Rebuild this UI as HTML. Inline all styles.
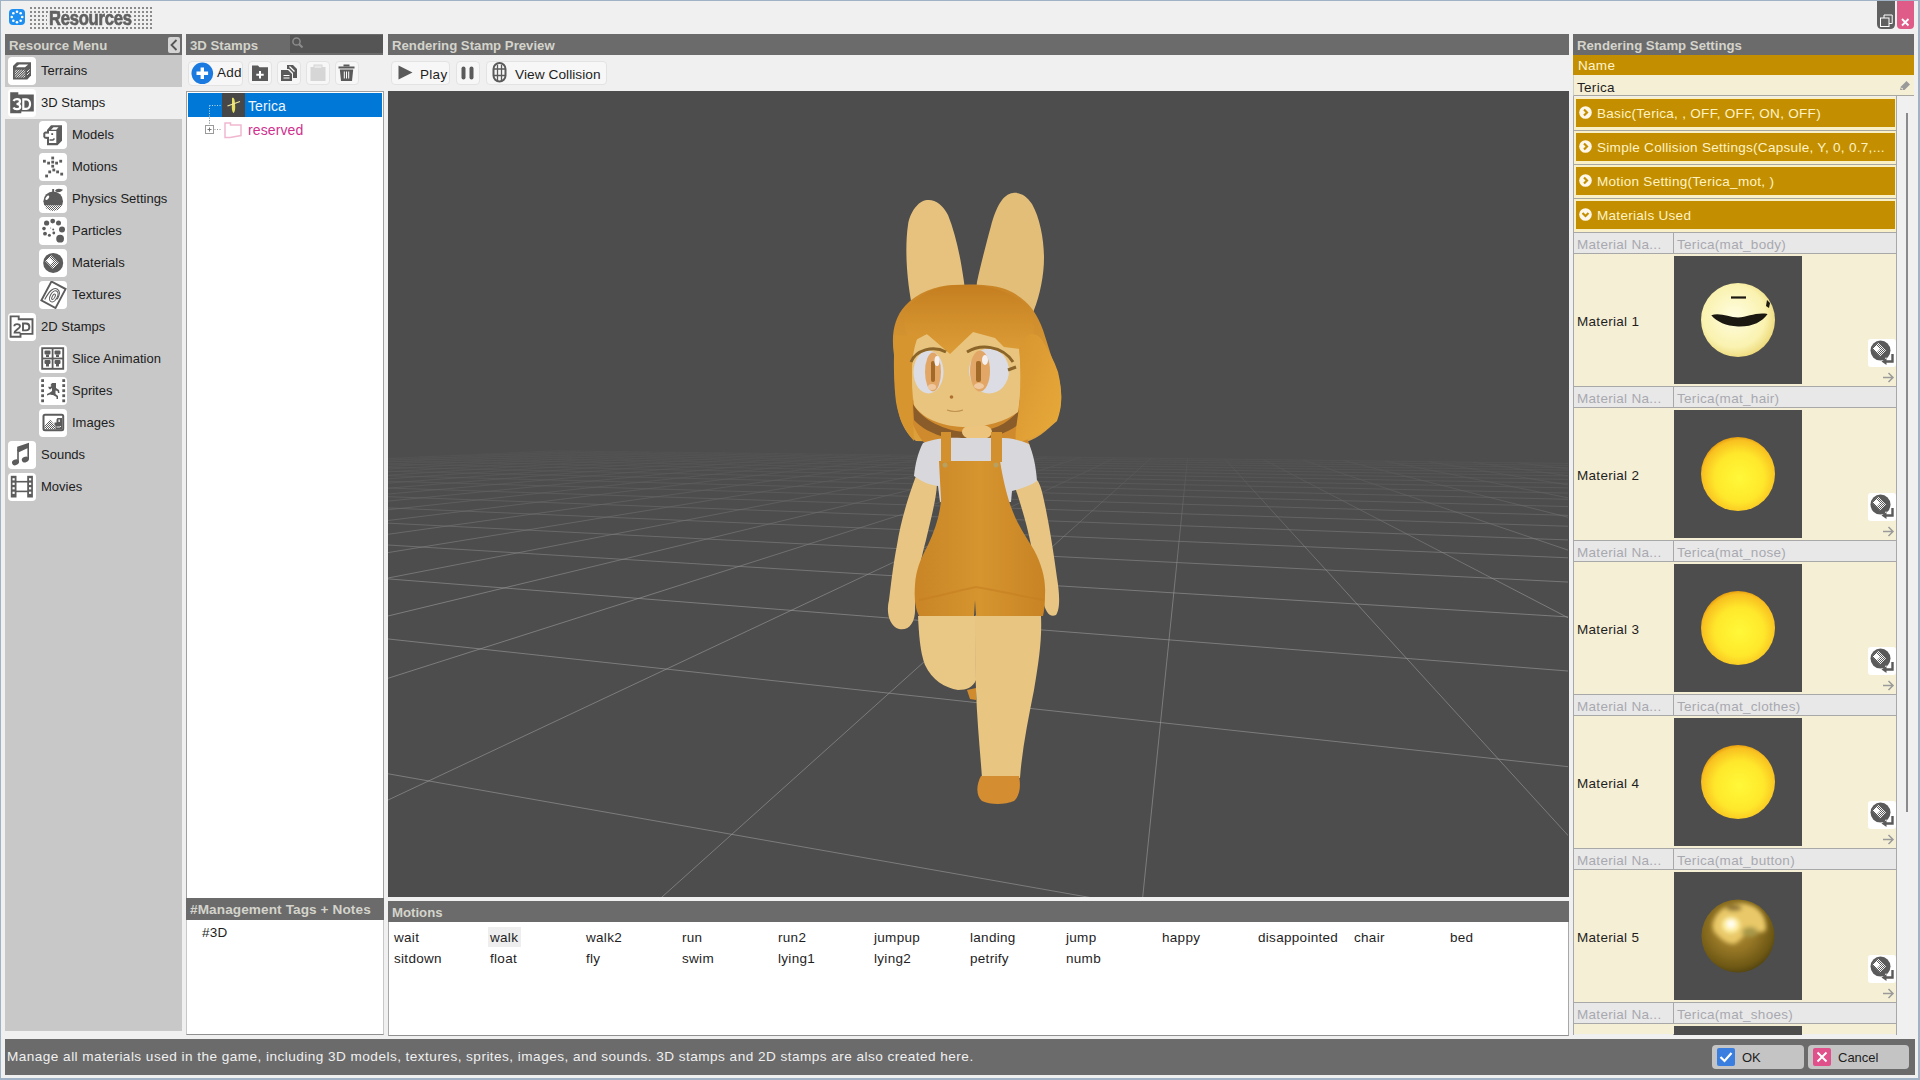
<!DOCTYPE html><html><head><meta charset="utf-8"><style>
*{box-sizing:border-box}
html,body{margin:0;padding:0}
body{width:1920px;height:1080px;overflow:hidden;position:relative;background:#f0f0f0;font-family:"Liberation Sans",sans-serif;font-size:13px;color:#1a1a1a}
.a{position:absolute}
svg.a{overflow:visible}
.t{position:absolute;white-space:nowrap;font-size:13.5px;line-height:16px;letter-spacing:0.3px;color:#1e1e1e}
.hdr{position:absolute;background:#6b6b6b;color:#d4d4cc;font-weight:bold;font-size:13.2px;line-height:23px;padding-left:4px;white-space:nowrap;overflow:hidden}
.ib{position:absolute;width:28px;height:28px;background:#fff;border-radius:4px}
.ib svg{position:absolute;left:0;top:0}
.mt{position:absolute;font-size:13px;line-height:16px;white-space:nowrap;color:#202020}
.tb{position:absolute;background:#f7f7f7;border:1px solid #e3e3e3;border-radius:4px}
.acc{position:absolute;left:1574px;width:323px;height:34px;background:#faf0c8;border-bottom:1px solid #a8a8a0}
.acc .g{position:absolute;left:2px;top:2px;right:2px;bottom:3px;background:#c38f00;color:#fff3c4;font-size:13.5px;letter-spacing:0.3px;line-height:29px;padding-left:21px;white-space:nowrap;overflow:hidden}
.acc svg{position:absolute;left:5px;top:9px}
.mh{position:absolute;left:1574px;width:323px;height:22px;background:#e8e8e8;border-top:1px solid #a8a8a8;border-bottom:1px solid #a8a8a8;color:#a8a8b0;font-size:13.5px;letter-spacing:0.3px;line-height:23px;white-space:nowrap}
.mb{position:absolute;left:1574px;width:323px;height:132px;background:#f5efd5}
</style></head><body>
<div class="a" style="left:0;top:0;width:1920px;height:1080px;border:1px solid #9fb2c6;border-width:1px 2px 2px 1px"></div>
<svg class="a" style="left:9px;top:9px" width="16" height="16"><rect width="16" height="16" rx="4" fill="#1e8ff0"/><circle cx="13.20" cy="8.00" r="1.3" fill="#fff"/><circle cx="11.68" cy="11.68" r="1.3" fill="#fff"/><circle cx="8.00" cy="13.20" r="1.3" fill="#fff"/><circle cx="4.32" cy="11.68" r="1.3" fill="#fff"/><circle cx="2.80" cy="8.00" r="1.3" fill="#fff"/><circle cx="4.32" cy="4.32" r="1.3" fill="#fff"/><circle cx="8.00" cy="2.80" r="1.3" fill="#fff"/><circle cx="11.68" cy="4.32" r="1.3" fill="#fff"/></svg>
<svg class="a" style="left:30px;top:7px" width="126" height="24" fill="#8a8a8a"><rect x="0" y="0" width="2" height="2"/><rect x="4" y="0" width="2" height="2"/><rect x="8" y="0" width="2" height="2"/><rect x="12" y="0" width="2" height="2"/><rect x="16" y="0" width="2" height="2"/><rect x="20" y="0" width="2" height="2"/><rect x="24" y="0" width="2" height="2"/><rect x="28" y="0" width="2" height="2"/><rect x="32" y="0" width="2" height="2"/><rect x="36" y="0" width="2" height="2"/><rect x="40" y="0" width="2" height="2"/><rect x="44" y="0" width="2" height="2"/><rect x="48" y="0" width="2" height="2"/><rect x="52" y="0" width="2" height="2"/><rect x="56" y="0" width="2" height="2"/><rect x="60" y="0" width="2" height="2"/><rect x="64" y="0" width="2" height="2"/><rect x="68" y="0" width="2" height="2"/><rect x="72" y="0" width="2" height="2"/><rect x="76" y="0" width="2" height="2"/><rect x="80" y="0" width="2" height="2"/><rect x="84" y="0" width="2" height="2"/><rect x="88" y="0" width="2" height="2"/><rect x="92" y="0" width="2" height="2"/><rect x="96" y="0" width="2" height="2"/><rect x="100" y="0" width="2" height="2"/><rect x="104" y="0" width="2" height="2"/><rect x="108" y="0" width="2" height="2"/><rect x="112" y="0" width="2" height="2"/><rect x="116" y="0" width="2" height="2"/><rect x="120" y="0" width="2" height="2"/><rect x="0" y="4" width="2" height="2"/><rect x="4" y="4" width="2" height="2"/><rect x="8" y="4" width="2" height="2"/><rect x="12" y="4" width="2" height="2"/><rect x="16" y="4" width="2" height="2"/><rect x="20" y="4" width="2" height="2"/><rect x="24" y="4" width="2" height="2"/><rect x="28" y="4" width="2" height="2"/><rect x="32" y="4" width="2" height="2"/><rect x="36" y="4" width="2" height="2"/><rect x="40" y="4" width="2" height="2"/><rect x="44" y="4" width="2" height="2"/><rect x="48" y="4" width="2" height="2"/><rect x="52" y="4" width="2" height="2"/><rect x="56" y="4" width="2" height="2"/><rect x="60" y="4" width="2" height="2"/><rect x="64" y="4" width="2" height="2"/><rect x="68" y="4" width="2" height="2"/><rect x="72" y="4" width="2" height="2"/><rect x="76" y="4" width="2" height="2"/><rect x="80" y="4" width="2" height="2"/><rect x="84" y="4" width="2" height="2"/><rect x="88" y="4" width="2" height="2"/><rect x="92" y="4" width="2" height="2"/><rect x="96" y="4" width="2" height="2"/><rect x="100" y="4" width="2" height="2"/><rect x="104" y="4" width="2" height="2"/><rect x="108" y="4" width="2" height="2"/><rect x="112" y="4" width="2" height="2"/><rect x="116" y="4" width="2" height="2"/><rect x="120" y="4" width="2" height="2"/><rect x="0" y="8" width="2" height="2"/><rect x="4" y="8" width="2" height="2"/><rect x="8" y="8" width="2" height="2"/><rect x="12" y="8" width="2" height="2"/><rect x="16" y="8" width="2" height="2"/><rect x="20" y="8" width="2" height="2"/><rect x="24" y="8" width="2" height="2"/><rect x="28" y="8" width="2" height="2"/><rect x="32" y="8" width="2" height="2"/><rect x="36" y="8" width="2" height="2"/><rect x="40" y="8" width="2" height="2"/><rect x="44" y="8" width="2" height="2"/><rect x="48" y="8" width="2" height="2"/><rect x="52" y="8" width="2" height="2"/><rect x="56" y="8" width="2" height="2"/><rect x="60" y="8" width="2" height="2"/><rect x="64" y="8" width="2" height="2"/><rect x="68" y="8" width="2" height="2"/><rect x="72" y="8" width="2" height="2"/><rect x="76" y="8" width="2" height="2"/><rect x="80" y="8" width="2" height="2"/><rect x="84" y="8" width="2" height="2"/><rect x="88" y="8" width="2" height="2"/><rect x="92" y="8" width="2" height="2"/><rect x="96" y="8" width="2" height="2"/><rect x="100" y="8" width="2" height="2"/><rect x="104" y="8" width="2" height="2"/><rect x="108" y="8" width="2" height="2"/><rect x="112" y="8" width="2" height="2"/><rect x="116" y="8" width="2" height="2"/><rect x="120" y="8" width="2" height="2"/><rect x="0" y="12" width="2" height="2"/><rect x="4" y="12" width="2" height="2"/><rect x="8" y="12" width="2" height="2"/><rect x="12" y="12" width="2" height="2"/><rect x="16" y="12" width="2" height="2"/><rect x="20" y="12" width="2" height="2"/><rect x="24" y="12" width="2" height="2"/><rect x="28" y="12" width="2" height="2"/><rect x="32" y="12" width="2" height="2"/><rect x="36" y="12" width="2" height="2"/><rect x="40" y="12" width="2" height="2"/><rect x="44" y="12" width="2" height="2"/><rect x="48" y="12" width="2" height="2"/><rect x="52" y="12" width="2" height="2"/><rect x="56" y="12" width="2" height="2"/><rect x="60" y="12" width="2" height="2"/><rect x="64" y="12" width="2" height="2"/><rect x="68" y="12" width="2" height="2"/><rect x="72" y="12" width="2" height="2"/><rect x="76" y="12" width="2" height="2"/><rect x="80" y="12" width="2" height="2"/><rect x="84" y="12" width="2" height="2"/><rect x="88" y="12" width="2" height="2"/><rect x="92" y="12" width="2" height="2"/><rect x="96" y="12" width="2" height="2"/><rect x="100" y="12" width="2" height="2"/><rect x="104" y="12" width="2" height="2"/><rect x="108" y="12" width="2" height="2"/><rect x="112" y="12" width="2" height="2"/><rect x="116" y="12" width="2" height="2"/><rect x="120" y="12" width="2" height="2"/><rect x="0" y="16" width="2" height="2"/><rect x="4" y="16" width="2" height="2"/><rect x="8" y="16" width="2" height="2"/><rect x="12" y="16" width="2" height="2"/><rect x="16" y="16" width="2" height="2"/><rect x="20" y="16" width="2" height="2"/><rect x="24" y="16" width="2" height="2"/><rect x="28" y="16" width="2" height="2"/><rect x="32" y="16" width="2" height="2"/><rect x="36" y="16" width="2" height="2"/><rect x="40" y="16" width="2" height="2"/><rect x="44" y="16" width="2" height="2"/><rect x="48" y="16" width="2" height="2"/><rect x="52" y="16" width="2" height="2"/><rect x="56" y="16" width="2" height="2"/><rect x="60" y="16" width="2" height="2"/><rect x="64" y="16" width="2" height="2"/><rect x="68" y="16" width="2" height="2"/><rect x="72" y="16" width="2" height="2"/><rect x="76" y="16" width="2" height="2"/><rect x="80" y="16" width="2" height="2"/><rect x="84" y="16" width="2" height="2"/><rect x="88" y="16" width="2" height="2"/><rect x="92" y="16" width="2" height="2"/><rect x="96" y="16" width="2" height="2"/><rect x="100" y="16" width="2" height="2"/><rect x="104" y="16" width="2" height="2"/><rect x="108" y="16" width="2" height="2"/><rect x="112" y="16" width="2" height="2"/><rect x="116" y="16" width="2" height="2"/><rect x="120" y="16" width="2" height="2"/><rect x="0" y="20" width="2" height="2"/><rect x="4" y="20" width="2" height="2"/><rect x="8" y="20" width="2" height="2"/><rect x="12" y="20" width="2" height="2"/><rect x="16" y="20" width="2" height="2"/><rect x="20" y="20" width="2" height="2"/><rect x="24" y="20" width="2" height="2"/><rect x="28" y="20" width="2" height="2"/><rect x="32" y="20" width="2" height="2"/><rect x="36" y="20" width="2" height="2"/><rect x="40" y="20" width="2" height="2"/><rect x="44" y="20" width="2" height="2"/><rect x="48" y="20" width="2" height="2"/><rect x="52" y="20" width="2" height="2"/><rect x="56" y="20" width="2" height="2"/><rect x="60" y="20" width="2" height="2"/><rect x="64" y="20" width="2" height="2"/><rect x="68" y="20" width="2" height="2"/><rect x="72" y="20" width="2" height="2"/><rect x="76" y="20" width="2" height="2"/><rect x="80" y="20" width="2" height="2"/><rect x="84" y="20" width="2" height="2"/><rect x="88" y="20" width="2" height="2"/><rect x="92" y="20" width="2" height="2"/><rect x="96" y="20" width="2" height="2"/><rect x="100" y="20" width="2" height="2"/><rect x="104" y="20" width="2" height="2"/><rect x="108" y="20" width="2" height="2"/><rect x="112" y="20" width="2" height="2"/><rect x="116" y="20" width="2" height="2"/><rect x="120" y="20" width="2" height="2"/></svg>
<div class="a" style="left:47px;top:14px;width:87px;height:12px;background:#f0f0f0"></div>
<div class="a" style="left:49px;top:5.5px;font-size:20px;line-height:24px;font-weight:bold;color:#606060;transform:scaleX(0.83);transform-origin:0 0;letter-spacing:-0.3px;-webkit-text-stroke:0.7px #606060">Resources</div>
<svg class="a" style="left:1877px;top:1px" width="18" height="29"><path d="M0,0 H18 V23 Q18,28 13,28 H5 Q0,28 0,23 Z" fill="#606060"/><rect x="3.5" y="17" width="8.5" height="8.5" fill="#606060" stroke="#fff" stroke-width="1"/><path d="M7,17 V14 H15.2 V22.5 H12" fill="none" stroke="#fff" stroke-width="1"/></svg>
<svg class="a" style="left:1897px;top:1px" width="18" height="29"><path d="M0,0 H17 V24 Q17,28 13,28 H4 Q0,28 0,24 Z" fill="#e05c88"/><path d="M5,18 L11.5,24.5 M11.5,18 L5,24.5" stroke="#fff" stroke-width="1.8"/></svg>
<div class="hdr" style="left:5px;top:34px;width:177px;height:21px">Resource Menu</div>
<svg class="a" style="left:168px;top:37px" width="12" height="16"><rect width="12" height="16" rx="2" fill="#d4d4d4"/><path d="M8.5,3 L3.5,8 L8.5,13" fill="none" stroke="#555" stroke-width="1.8"/></svg>
<div class="a" style="left:5px;top:55px;width:177px;height:976px;background:#c8c8c8"></div>
<div class="a" style="left:5px;top:87px;width:177px;height:32px;background:#efefef"></div>
<div class="ib" style="left:8px;top:57px"><svg width="28" height="28" viewBox="0 0 28 28" style="position:absolute;left:0;top:0"><defs><clipPath id="tc"><rect x="6.8" y="12.5" width="10.5" height="8.3"/></clipPath></defs>
<path fill="#5c5c5c" d="M5,9 L8.8,5.3 L23,5.3 L23,18.5 L19.3,22.4 L5,22.4 Z"/>
<path fill="#fff" d="M7.8,10.2 L11,7.4 L20.2,7.4 L17,10.2 Z"/>
<g clip-path="url(#tc)"><line x1="-1.5000000000000009" y1="20.8" x2="6.8" y2="12.5" stroke="#fff" stroke-width="0.9"/><line x1="0.8999999999999986" y1="20.8" x2="9.2" y2="12.5" stroke="#fff" stroke-width="0.9"/><line x1="3.299999999999999" y1="20.8" x2="11.6" y2="12.5" stroke="#fff" stroke-width="0.9"/><line x1="5.699999999999999" y1="20.8" x2="14.0" y2="12.5" stroke="#fff" stroke-width="0.9"/><line x1="8.099999999999998" y1="20.8" x2="16.4" y2="12.5" stroke="#fff" stroke-width="0.9"/><line x1="10.5" y1="20.8" x2="18.8" y2="12.5" stroke="#fff" stroke-width="0.9"/><line x1="12.899999999999999" y1="20.8" x2="21.2" y2="12.5" stroke="#fff" stroke-width="0.9"/><line x1="15.3" y1="20.8" x2="23.6" y2="12.5" stroke="#fff" stroke-width="0.9"/><line x1="17.7" y1="20.8" x2="26.0" y2="12.5" stroke="#fff" stroke-width="0.9"/></g>
<line x1="19" y1="15" x2="21.5" y2="12.5" stroke="#fff" stroke-width="0.9"/><line x1="19" y1="18" x2="21.5" y2="15.5" stroke="#fff" stroke-width="0.9"/></svg></div>
<div class="mt" style="left:41px;top:63px">Terrains</div>
<div class="ib" style="left:8px;top:89px"><svg width="28" height="28" viewBox="0 0 28 28" style="position:absolute;left:0;top:0"><path fill="#5c5c5c" d="M2.2,3.3 L10.3,3.3 L10.3,5.6 L25.8,5.6 L25.8,22.4 L13.3,22.4 L13.3,24.3 L2.2,24.3 Z"/>
<path fill="none" stroke="#fff" stroke-width="2.2" d="M5.5,12 C6.5,9.5 12,9.5 12,12.3 C12,14.5 9.5,15 8.5,15 C10,15 12.2,15.5 12.2,17.8 C12.2,20.8 6.5,20.8 5.5,18.5"/>
<path fill="none" stroke="#fff" stroke-width="2.2" d="M15.3,10.3 L18.3,10.3 C23.3,10.3 23.3,19.8 18.3,19.8 L15.3,19.8 Z"/></svg></div>
<div class="mt" style="left:41px;top:95px">3D Stamps</div>
<div class="ib" style="left:39px;top:121px"><svg width="28" height="28" viewBox="0 0 28 28" style="position:absolute;left:0;top:0"><path fill="#5c5c5c" d="M8,9 L12,4.3 L23,4.3 L23,19.8 L18.5,24.2 L8,24.2 L8,18 L5.5,17.5 L4.3,16 L4.3,12 L6,10.5 L8,10.5 Z"/>
<path fill="#fff" d="M10,10 L10,22 L17.3,22 L17.3,10 Z"/><path fill="#fff" d="M6.3,12.6 L10,12.6 L10,15.8 L6.3,15.8 Z"/>
<path fill="#fff" d="M12,8.8 L14.5,6.2 L19.5,6.2 L17.3,8.8 Z"/>
<rect x="12.3" y="12.2" width="1.8" height="1.8" fill="#5c5c5c"/>
<path d="M10.5,19 L14,19 L15.5,17.5" stroke="#5c5c5c" stroke-width="1.5" fill="none"/></svg></div>
<div class="mt" style="left:72px;top:127px">Models</div>
<div class="ib" style="left:39px;top:153px"><svg width="28" height="28" viewBox="0 0 28 28" style="position:absolute;left:0;top:0"><rect x="12.299999999999999" y="3.6" width="2.8" height="2.8" fill="#5c5c5c"/><rect x="4.0" y="6.799999999999999" width="2.8" height="2.8" fill="#5c5c5c"/><rect x="8.2" y="8.7" width="2.8" height="2.8" fill="#5c5c5c"/><rect x="12.299999999999999" y="7.699999999999999" width="2.8" height="2.8" fill="#5c5c5c"/><rect x="16.200000000000003" y="8.7" width="2.8" height="2.8" fill="#5c5c5c"/><rect x="20.3" y="6.799999999999999" width="2.8" height="2.8" fill="#5c5c5c"/><rect x="12.299999999999999" y="11.799999999999999" width="2.8" height="2.8" fill="#5c5c5c"/><rect x="13.4" y="15.6" width="2.8" height="2.8" fill="#5c5c5c"/><rect x="9.299999999999999" y="17.5" width="2.8" height="2.8" fill="#5c5c5c"/><rect x="17.200000000000003" y="17.5" width="2.8" height="2.8" fill="#5c5c5c"/><rect x="6.199999999999999" y="21.6" width="2.8" height="2.8" fill="#5c5c5c"/><rect x="21.3" y="19.700000000000003" width="2.8" height="2.8" fill="#5c5c5c"/></svg></div>
<div class="mt" style="left:72px;top:159px">Motions</div>
<div class="ib" style="left:39px;top:185px"><svg width="28" height="28" viewBox="0 0 28 28" style="position:absolute;left:0;top:0"><defs><pattern id="chk" width="2" height="2" patternUnits="userSpaceOnUse"><rect width="1" height="1" fill="#5c5c5c"/><rect x="1" y="1" width="1" height="1" fill="#5c5c5c"/></pattern>
<clipPath id="ac"><circle cx="14.2" cy="16.3" r="9.8"/></clipPath></defs>
<g clip-path="url(#ac)"><rect x="3" y="5" width="23" height="15.3" fill="#5c5c5c"/><rect x="3" y="20.3" width="23" height="6" fill="url(#chk)"/></g>
<rect x="13.2" y="4" width="1.9" height="5" fill="#5c5c5c"/>
<path fill="#5c5c5c" d="M16,6 C17,3.5 20,2.8 24,4.8 C22,7.5 19,8 16,6 Z"/>
<ellipse cx="8.3" cy="12.8" rx="1.3" ry="2.6" transform="rotate(40 8.3 12.8)" fill="#fff"/></svg></div>
<div class="mt" style="left:72px;top:191px">Physics Settings</div>
<div class="ib" style="left:39px;top:217px"><svg width="28" height="28" viewBox="0 0 28 28" style="position:absolute;left:0;top:0"><circle cx="13.7" cy="4.1" r="2.4" fill="#5c5c5c"/><circle cx="7.6" cy="6" r="2.6" fill="#5c5c5c"/><circle cx="19.5" cy="6" r="2.5" fill="#5c5c5c"/><circle cx="5" cy="11.6" r="1.8" fill="#5c5c5c"/><circle cx="23" cy="12.6" r="3" fill="#5c5c5c"/><circle cx="6" cy="16.7" r="1.9" fill="#5c5c5c"/><circle cx="10.4" cy="18.3" r="1.5" fill="#5c5c5c"/><circle cx="14.8" cy="16" r="1.4" fill="#5c5c5c"/><circle cx="14.2" cy="12.6" r="1" fill="#5c5c5c"/><circle cx="11.7" cy="11" r="0.5" fill="#5c5c5c"/><circle cx="21.1" cy="21.7" r="3.9" fill="#5c5c5c"/></svg></div>
<div class="mt" style="left:72px;top:223px">Particles</div>
<div class="ib" style="left:39px;top:249px"><svg width="28" height="28" viewBox="0 0 28 28" style="position:absolute;left:0;top:0"><defs><pattern id="chk2" width="2" height="2" patternUnits="userSpaceOnUse"><rect width="1" height="1" fill="#fff"/><rect x="1" y="1" width="1" height="1" fill="#fff"/></pattern></defs>
<circle cx="14.2" cy="13.9" r="10" fill="#5c5c5c"/>
<path d="M12,6 L20,14 L14,20 L6,12 Z" fill="url(#chk2)"/>
<path d="M10.5,9 L14,12.5 L11,15.5 L7.5,12 Z" fill="#fff"/></svg></div>
<div class="mt" style="left:72px;top:255px">Materials</div>
<div class="ib" style="left:39px;top:281px"><svg width="28" height="28" viewBox="0 0 28 28" style="position:absolute;left:0;top:0"><g transform="rotate(28 14.5 13.7)"><rect x="6.5" y="3" width="16" height="21.5" fill="none" stroke="#5c5c5c" stroke-width="1.9"/>
<path d="M9,22 C9,12 11,7 15,7 C19,7 20,12 20,16" stroke="#5c5c5c" stroke-width="1.1" fill="none"/>
<ellipse cx="15.5" cy="15" rx="3.5" ry="6" stroke="#5c5c5c" stroke-width="1.1" fill="none"/>
<ellipse cx="15.5" cy="15.5" rx="1.3" ry="3" stroke="#5c5c5c" stroke-width="1" fill="none"/></g></svg></div>
<div class="mt" style="left:72px;top:287px">Textures</div>
<div class="ib" style="left:8px;top:313px"><svg width="28" height="28" viewBox="0 0 28 28" style="position:absolute;left:0;top:0"><path fill="none" stroke="#5c5c5c" stroke-width="1.9" d="M2.6,3.4 L10.7,3.4 L10.7,6.2 L24.5,6.2 L24.5,20.9 L12.5,20.9 L12.5,23.8 L2.6,23.8 Z"/>
<path fill="none" stroke="#5c5c5c" stroke-width="1.9" d="M6.3,13.2 C6.3,10.6 12,10.3 12,13.2 C12,15.5 7,17 6.6,19.6 L12.5,19.6"/>
<path fill="none" stroke="#5c5c5c" stroke-width="1.9" d="M15,10.5 L18,10.5 C22.5,10.5 22.5,17.4 18,17.4 L15,17.4 Z"/></svg></div>
<div class="mt" style="left:41px;top:319px">2D Stamps</div>
<div class="ib" style="left:39px;top:345px"><svg width="28" height="28" viewBox="0 0 28 28" style="position:absolute;left:0;top:0"><rect x="3.2" y="3.2" width="21" height="20.6" fill="none" stroke="#5c5c5c" stroke-width="1.9"/>
<line x1="13.6" y1="3" x2="13.6" y2="24" stroke="#5c5c5c" stroke-width="1.8"/><line x1="3" y1="13.5" x2="24.5" y2="13.5" stroke="#5c5c5c" stroke-width="1.8"/><rect x="5.5" y="5.5" width="6" height="4" rx="1" fill="#5c5c5c"/><rect x="7.0" y="9.5" width="3" height="2.5" fill="#5c5c5c"/><rect x="15.5" y="5.5" width="6" height="4" rx="1" fill="#5c5c5c"/><rect x="17.0" y="9.5" width="3" height="2.5" fill="#5c5c5c"/><rect x="5.5" y="15" width="6" height="4" rx="1" fill="#5c5c5c"/><rect x="7.0" y="19" width="3" height="2.5" fill="#5c5c5c"/><rect x="15.5" y="15" width="6" height="4" rx="1" fill="#5c5c5c"/><rect x="17.0" y="19" width="3" height="2.5" fill="#5c5c5c"/></svg></div>
<div class="mt" style="left:72px;top:351px">Slice Animation</div>
<div class="ib" style="left:39px;top:377px"><svg width="28" height="28" viewBox="0 0 28 28" style="position:absolute;left:0;top:0"><rect x="2.2" y="2.2" width="2.8" height="2.8" fill="#5c5c5c"/><rect x="23.3" y="2.2" width="2.8" height="2.8" fill="#5c5c5c"/><rect x="2.2" y="7.2" width="2.8" height="2.8" fill="#5c5c5c"/><rect x="23.3" y="7.2" width="2.8" height="2.8" fill="#5c5c5c"/><rect x="2.2" y="12.3" width="2.8" height="2.8" fill="#5c5c5c"/><rect x="23.3" y="12.3" width="2.8" height="2.8" fill="#5c5c5c"/><rect x="2.2" y="17.3" width="2.8" height="2.8" fill="#5c5c5c"/><rect x="23.3" y="17.3" width="2.8" height="2.8" fill="#5c5c5c"/><rect x="2.2" y="22.4" width="2.8" height="2.8" fill="#5c5c5c"/><rect x="23.3" y="22.4" width="2.8" height="2.8" fill="#5c5c5c"/><path fill="#5c5c5c" d="M13,6 L17,6 L17,11 L20,13 L20.5,16 L19,16 L18.5,14 L16.5,13.5 L16.5,17 L19,19 L19,22 L17.5,22 L17.5,20 L14,18 L13,18 L11,17.5 L8,18.5 L8,17 L11,15.5 L13,14 L13,11 L11,12.5 L9.5,11 L9.5,9.5 L11,10 L12.5,9 L11.5,8 Z"/></svg></div>
<div class="mt" style="left:72px;top:383px">Sprites</div>
<div class="ib" style="left:39px;top:409px"><svg width="28" height="28" viewBox="0 0 28 28" style="position:absolute;left:0;top:0"><defs><pattern id="chk3" width="2" height="2" patternUnits="userSpaceOnUse"><rect width="1" height="1" fill="#5c5c5c"/><rect x="1" y="1" width="1" height="1" fill="#5c5c5c"/></pattern></defs>
<rect x="4.5" y="5.7" width="19.7" height="15.6" rx="1.5" fill="none" stroke="#5c5c5c" stroke-width="2"/>
<path d="M5.5,20.5 L5.5,17 L11,10.5 L16.5,17 L16.5,20.5 Z" fill="url(#chk3)"/>
<path fill="#5c5c5c" d="M18.5,9 L23,9 L23,20.5 L16.5,20.5 L16.5,16.5 L15.5,16.5 L15.5,13.5 L17.5,13.5 L17.5,10.5 Z"/>
<rect x="19.5" y="10.5" width="1.3" height="2.5" fill="#fff"/><path d="M17.5,18 L21,18 L22,17" stroke="#fff" stroke-width="0.9" fill="none"/></svg></div>
<div class="mt" style="left:72px;top:415px">Images</div>
<div class="ib" style="left:8px;top:441px"><svg width="28" height="28" viewBox="0 0 28 28" style="position:absolute;left:0;top:0"><path fill="#5c5c5c" d="M9.2,8.5 L21,3 L21,18.5 L19.4,18.5 L19.4,7.3 L10.8,11.2 L10.8,21.5 L9.2,21.5 Z"/>
<path fill="#5c5c5c" d="M9.2,5.8 L21,1.8 L21,6 L9.2,10.2 Z"/>
<ellipse cx="7.5" cy="21.3" rx="3.6" ry="2.8" transform="rotate(-25 7.5 21.3)" fill="#5c5c5c"/>
<ellipse cx="17.3" cy="18.5" rx="3.6" ry="2.8" transform="rotate(-25 17.3 18.5)" fill="#5c5c5c"/></svg></div>
<div class="mt" style="left:41px;top:447px">Sounds</div>
<div class="ib" style="left:8px;top:473px"><svg width="28" height="28" viewBox="0 0 28 28" style="position:absolute;left:0;top:0"><rect x="2.8" y="2.8" width="5.7" height="21.7" fill="#5c5c5c"/><rect x="19.2" y="2.8" width="5.7" height="21.7" fill="#5c5c5c"/><rect x="8" y="7.9" width="12" height="1.6" fill="#5c5c5c"/><rect x="8" y="17.6" width="12" height="1.6" fill="#5c5c5c"/><rect x="4.5" y="5.2" width="2.2" height="2.2" fill="#fff"/><rect x="21" y="5.2" width="2.2" height="2.2" fill="#fff"/><rect x="4.5" y="9.7" width="2.2" height="2.2" fill="#fff"/><rect x="21" y="9.7" width="2.2" height="2.2" fill="#fff"/><rect x="4.5" y="14.2" width="2.2" height="2.2" fill="#fff"/><rect x="21" y="14.2" width="2.2" height="2.2" fill="#fff"/><rect x="4.5" y="18.7" width="2.2" height="2.2" fill="#fff"/><rect x="21" y="18.7" width="2.2" height="2.2" fill="#fff"/></svg></div>
<div class="mt" style="left:41px;top:479px">Movies</div>
<div class="hdr" style="left:186px;top:34px;width:197px;height:21px">3D Stamps</div>
<div class="a" style="left:290px;top:35px;width:93px;height:18px;background:#555"></div>
<svg class="a" style="left:291px;top:36px" width="14" height="14"><circle cx="5.5" cy="5.5" r="3.6" fill="none" stroke="#8c8c8c" stroke-width="1.5"/><path d="M8.2,8.2 L11.5,11.5" stroke="#8c8c8c" stroke-width="2"/></svg>
<div class="tb" style="left:188px;top:61px;width:55px;height:25px"></div>
<svg class="a" style="left:191px;top:62px" width="23" height="23"><circle cx="11.3" cy="11.3" r="10.8" fill="#1a7ae0"/><path d="M11.3,5.5 V17.1 M5.5,11.3 H17.1" stroke="#fff" stroke-width="3.4"/></svg>
<div class="t" style="left:217px;top:65px">Add</div>
<div class="tb" style="left:248px;top:61px;width:24px;height:24px"></div>
<div class="tb" style="left:277px;top:61px;width:24px;height:24px"></div>
<div class="tb" style="left:306px;top:61px;width:24px;height:24px"></div>
<div class="tb" style="left:335px;top:61px;width:24px;height:24px"></div>
<svg class="a" style="left:252px;top:65px" width="16" height="16"><path d="M0,0.5 H6 L7.5,2.3 H16 V16 H0 Z" fill="#5a5a5a"/><path d="M8,6 V13.5 M4.3,9.8 H11.7" stroke="#fff" stroke-width="2"/></svg>
<svg class="a" style="left:281px;top:65px" width="17" height="16"><path d="M6,0 H12 L16,4 V13 H12 V8 L8,4 H6 Z" fill="#5a5a5a"/><path d="M0,5 H7 L11,9 V16 H0 Z" fill="#5a5a5a"/><path d="M2.5,10.5 H8.5 M2.5,13 H8.5" stroke="#fff" stroke-width="1"/><path d="M8.5,1.5 L13.5,6.5" stroke="#fff" stroke-width="1.2"/></svg>
<svg class="a" style="left:310px;top:65px" width="16" height="16"><rect x="0.5" y="2" width="15" height="14" fill="#d6d6d6"/><rect x="4" y="0" width="8" height="3.5" fill="#e8e8e8" stroke="#d6d6d6"/></svg>
<svg class="a" style="left:338px;top:64px" width="18" height="18"><rect x="0.5" y="2.5" width="16" height="2" fill="#5a5a5a"/><rect x="5.5" y="0.5" width="6" height="2" fill="#5a5a5a"/><path d="M1.8,5.5 H15.2 L14,17 H3 Z" fill="#5a5a5a"/><path d="M6.3,7.5 V14.5 M8.5,7.5 V14.5 M10.7,7.5 V14.5" stroke="#fff" stroke-width="1"/></svg>
<div class="a" style="left:186px;top:91px;width:198px;height:808px;background:#fff;border:1px solid #a0a0a0;border-bottom:0"></div>
<div class="a" style="left:188px;top:93px;width:194px;height:24px;background:#0078d7"></div>
<div class="a" style="left:222px;top:93px;width:23px;height:24px;background:#474747"></div>
<svg class="a" style="left:226px;top:96px" width="16" height="20"><path d="M6,2 C8,1 9,4 9,8 C9.5,12 9,16 7.5,17 C6,16 5.5,12 6,8 Z" fill="#e8e060"/><path d="M1.5,10 L14,5.5" stroke="#f0e8a0" stroke-width="1.3"/></svg>
<svg class="a" style="left:205px;top:101px" width="20" height="35"><path d="M4.5,4.5 H16 M4.5,4.5 V24" stroke="#b8d8f0" stroke-width="1" stroke-dasharray="1,1.5"/><path d="M4.5,14 V24 M9.5,28.5 H16" stroke="#909090" stroke-width="1" stroke-dasharray="1,1.5"/><rect x="0.5" y="24.5" width="8" height="8" fill="#fff" stroke="#9a9a9a"/><path d="M2.5,28.5 H6.5 M4.5,26.5 V30.5" stroke="#777" stroke-width="1"/></svg>
<svg class="a" style="left:224px;top:121px" width="19" height="18"><path d="M1,2 H6.5 V4 H17 V14.5 L6,16.5 L1,16.5 Z" fill="none" stroke="#f0b8d0" stroke-width="1.5"/></svg>
<div class="t" style="left:248px;top:98px;color:#eef6ff;font-size:14px;letter-spacing:0.1px">Terica</div>
<div class="t" style="left:248px;top:122px;color:#d0308e;font-size:14px;letter-spacing:0.1px">reserved</div>
<div class="hdr" style="left:186px;top:898px;width:198px;height:22px;line-height:23px;font-size:13.6px;letter-spacing:0.1px">#Management Tags + Notes</div>
<div class="a" style="left:186px;top:920px;width:198px;height:115px;background:#fff;border:1px solid #c8c8c8;border-bottom-color:#909090;border-top:0"></div>
<div class="t" style="left:202px;top:925px">#3D</div>
<div class="hdr" style="left:388px;top:34px;width:1181px;height:21px">Rendering Stamp Preview</div>
<div class="tb" style="left:391px;top:61px;width:59px;height:24px"></div>
<svg class="a" style="left:398px;top:65px" width="15" height="16"><path d="M0.5,0.5 L14.5,7.5 L0.5,14.5 Z" fill="#5a5a5a"/></svg>
<div class="t" style="left:420px;top:67px">Play</div>
<div class="tb" style="left:456px;top:61px;width:24px;height:24px"></div>
<svg class="a" style="left:461px;top:66px" width="14" height="14"><rect x="0.5" y="0.5" width="4" height="13" rx="2" fill="#5a5a5a"/><rect x="8.5" y="0.5" width="4" height="13" rx="2" fill="#5a5a5a"/></svg>
<div class="tb" style="left:486px;top:61px;width:121px;height:24px"></div>
<svg class="a" style="left:492px;top:62px" width="16" height="21"><rect x="1.5" y="1" width="12" height="18.5" rx="6" fill="none" stroke="#5a5a5a" stroke-width="2"/><path d="M5.5,2.5 V18 M9.5,2.5 V18 M1.5,7 H13.5 M1.5,13.5 H13.5" stroke="#5a5a5a" stroke-width="1.3"/></svg>
<div class="t" style="left:515px;top:67px;font-size:13.7px;letter-spacing:0.05px">View Collision</div>
<div class="a" style="left:388px;top:91px;width:1181px;height:806px;background:#4d4d4d;overflow:hidden">
<svg width="1180" height="807" style="position:absolute;left:0;top:0"><defs><linearGradient id="fade" x1="0" y1="0" x2="0" y2="1"><stop offset="0" stop-color="#4d4d4d" stop-opacity="0.95"/><stop offset="0.3" stop-color="#4d4d4d" stop-opacity="0.72"/><stop offset="0.65" stop-color="#4d4d4d" stop-opacity="0.3"/><stop offset="1" stop-color="#4d4d4d" stop-opacity="0"/></linearGradient></defs><g stroke="#9c9c9c" stroke-width="0.6" fill="none"><line x1="-5.0" y1="367.7" x2="169.7" y2="359.8"/>
<line x1="-5.0" y1="369.5" x2="192.1" y2="360.1"/>
<line x1="-5.0" y1="371.3" x2="215.0" y2="360.4"/>
<line x1="-5.0" y1="373.4" x2="238.3" y2="360.7"/>
<line x1="-5.0" y1="375.7" x2="262.2" y2="361.0"/>
<line x1="-5.0" y1="378.3" x2="286.5" y2="361.3"/>
<line x1="-5.0" y1="381.2" x2="311.4" y2="361.6"/>
<line x1="-5.0" y1="384.5" x2="336.8" y2="361.9"/>
<line x1="-5.0" y1="388.2" x2="362.9" y2="362.2"/>
<line x1="-5.0" y1="392.5" x2="389.4" y2="362.6"/>
<line x1="-5.0" y1="397.6" x2="416.7" y2="362.9"/>
<line x1="-5.0" y1="403.5" x2="444.5" y2="363.3"/>
<line x1="-5.0" y1="410.6" x2="473.0" y2="363.6"/>
<line x1="-5.0" y1="419.3" x2="502.2" y2="364.0"/>
<line x1="-5.0" y1="430.1" x2="532.0" y2="364.4"/>
<line x1="-5.0" y1="444.0" x2="562.6" y2="364.7"/>
<line x1="-5.0" y1="462.4" x2="594.0" y2="365.1"/>
<line x1="-5.0" y1="488.0" x2="626.1" y2="365.5"/>
<line x1="-5.0" y1="526.2" x2="659.0" y2="365.9"/>
<line x1="-5.0" y1="588.9" x2="692.8" y2="366.4"/>
<line x1="-5.0" y1="711.4" x2="727.5" y2="366.8"/>
<line x1="-5.0" y1="681.9" x2="733.4" y2="812.0"/>
<line x1="267.3" y1="812.0" x2="763.0" y2="367.2"/>
<line x1="-5.0" y1="547.4" x2="1185.0" y2="676.2"/>
<line x1="754.1" y1="812.0" x2="799.5" y2="367.7"/>
<line x1="-5.0" y1="487.5" x2="1185.0" y2="580.4"/>
<line x1="1185.0" y1="749.9" x2="837.0" y2="368.2"/>
<line x1="-5.0" y1="453.7" x2="1185.0" y2="526.2"/>
<line x1="1185.0" y1="529.3" x2="875.5" y2="368.6"/>
<line x1="-5.0" y1="431.9" x2="1185.0" y2="491.3"/>
<line x1="1185.0" y1="460.8" x2="915.1" y2="369.1"/>
<line x1="-5.0" y1="416.7" x2="1185.0" y2="467.0"/>
<line x1="1185.0" y1="427.5" x2="955.8" y2="369.6"/>
<line x1="-5.0" y1="405.5" x2="1185.0" y2="449.1"/>
<line x1="1185.0" y1="407.8" x2="997.6" y2="370.2"/>
<line x1="-5.0" y1="396.9" x2="1185.0" y2="435.4"/>
<line x1="1185.0" y1="394.8" x2="1040.7" y2="370.7"/>
<line x1="-5.0" y1="390.1" x2="1185.0" y2="424.5"/>
<line x1="1185.0" y1="385.5" x2="1085.0" y2="371.3"/>
<line x1="-5.0" y1="384.6" x2="1185.0" y2="415.7"/>
<line x1="1185.0" y1="378.6" x2="1130.6" y2="371.8"/>
<line x1="-5.0" y1="380.1" x2="1185.0" y2="408.4"/>
<line x1="1185.0" y1="373.2" x2="1177.6" y2="372.4"/>
<line x1="-5.0" y1="376.2" x2="1185.0" y2="402.2"/>
<line x1="-5.0" y1="372.9" x2="1185.0" y2="397.0"/>
<line x1="-5.0" y1="370.1" x2="1185.0" y2="392.4"/>
<line x1="-3.4" y1="367.7" x2="1185.0" y2="388.5"/>
<line x1="31.7" y1="366.1" x2="1185.0" y2="385.0"/>
<line x1="64.0" y1="364.6" x2="1185.0" y2="382.0"/>
<line x1="93.6" y1="363.3" x2="1185.0" y2="379.2"/>
<line x1="120.9" y1="362.0" x2="1185.0" y2="376.7"/>
<line x1="146.2" y1="360.9" x2="1185.0" y2="374.5"/>
<line x1="169.7" y1="359.8" x2="1185.0" y2="372.5"/></g><rect x="0" y="357" width="1181" height="150" fill="url(#fade)"/></svg>
<svg width="1180" height="807" style="position:absolute;left:0;top:0">
<defs>
<linearGradient id="hairg" x1="0" y1="0" x2="0" y2="1"><stop offset="0" stop-color="#c98426"/><stop offset="0.5" stop-color="#d99a36"/><stop offset="1" stop-color="#dca03c"/></linearGradient>
<linearGradient id="ovg" x1="0" y1="0" x2="1" y2="0"><stop offset="0" stop-color="#c98526"/><stop offset="0.5" stop-color="#d6952f"/><stop offset="1" stop-color="#c88324"/></linearGradient>
<linearGradient id="bangg" x1="0" y1="0" x2="0" y2="1"><stop offset="0" stop-color="#c47e20"/><stop offset="0.6" stop-color="#d4922e"/><stop offset="1" stop-color="#dc9c36"/></linearGradient>
<linearGradient id="rsg" x1="0" y1="0" x2="1" y2="1"><stop offset="0" stop-color="#d89530"/><stop offset="1" stop-color="#e8aa3a"/></linearGradient>
</defs>
<g transform="translate(-388,-91)">
<!-- ears -->
<path fill="#e6c27e" d="M927,200 C918,201 910,212 908,225 C905,245 906,275 912,306 L966,300 L964,282 C961,260 956,235 948,215 C943,205 935,199 927,200 Z"/>
<path fill="#e3be79" d="M1013,193 C1003,194 996,207 991,226 C985,248 980,268 977,282 L975,298 L1030,322 L1034,310 C1040,295 1044,275 1044,258 C1044,240 1040,218 1032,204 C1027,196 1020,192 1013,193 Z"/>
<!-- back hair -->
<path fill="url(#hairg)" d="M953,285 C935,286 918,292 905,306 C894,318 891,335 894,355 C895,375 894,395 900,418 C904,430 910,437 916,441 L1020,444 C1035,440 1048,432 1057,418 C1063,405 1062,390 1058,375 C1052,360 1048,345 1043,330 C1036,310 1025,297 1005,289 C990,284 970,284 953,285 Z"/>
<path fill="#d08a2e" d="M904,400 C910,420 918,438 926,444 L1030,446 C1024,430 1020,418 1020,400 Z"/>
<path fill="#8a5c2a" d="M913,404 C922,420 945,431 966,432 C990,433 1008,424 1019,410 L1019,424 C1008,433 990,440 968,440 C945,440 925,432 914,420 Z"/>
<ellipse cx="977" cy="432" rx="15" ry="8" fill="#ecc47e"/>
<!-- face -->
<path fill="#e8c47e" d="M912,338 C910,360 911,385 914,405 C922,418 940,426 963,427 C988,427 1006,421 1018,412 C1021,395 1021,370 1019,345 L1000,335 L975,330 L950,352 L927,334 Z"/>
<!-- bangs -->
<path fill="url(#bangg)" d="M905,310 C920,292 940,285 960,285 C985,284 1010,290 1028,306 C1036,318 1036,335 1028,350 L1004,347 L995,338 L973,332 L950,354 L927,334 L912,342 C905,335 903,322 905,310 Z"/>
<!-- side hair strands -->
<path fill="#d6952f" d="M895,335 C893,360 894,385 896,402 C899,420 906,432 914,441 C913,420 912,395 912,372 C912,355 915,345 918,336 Z"/>
<path fill="url(#rsg)" d="M1019,348 C1022,370 1021,395 1018,415 C1016,428 1015,436 1016,443 C1030,440 1045,432 1057,421 C1063,405 1062,390 1058,372 C1054,360 1048,350 1042,340 C1035,330 1025,332 1019,348 Z"/>
<!-- eyes -->
<ellipse cx="928.5" cy="372" rx="15" ry="21.5" fill="#dcdce4"/>
<ellipse cx="989" cy="371" rx="20" ry="22.5" fill="#dcdce4"/>
<ellipse cx="933" cy="372" rx="8" ry="19.5" fill="#e2a766"/>
<ellipse cx="980" cy="371" rx="10" ry="20.5" fill="#e2a766"/>
<rect x="931" y="361" width="4" height="21" rx="2" fill="#a26a28"/>
<rect x="976" y="361" width="5" height="21" rx="2" fill="#a26a28"/>
<path d="M911,362 C916,350 933,345 946,352" stroke="#8a6428" stroke-width="3" fill="none"/>
<path d="M967,352 C980,344 1002,345 1013,362 M1008,370 L1016,367" stroke="#8a6428" stroke-width="3" fill="none"/>
<ellipse cx="937" cy="361" rx="2.5" ry="5" fill="#f4f0f0"/><ellipse cx="985" cy="360" rx="3" ry="5" fill="#f4f0f0"/><ellipse cx="932" cy="387" rx="4" ry="3" fill="#f0c8a0"/><ellipse cx="979" cy="386" rx="5" ry="3" fill="#f0c8a0"/><circle cx="951.5" cy="397" r="1.8" fill="#b07030"/>
<path d="M947,410 Q955,413 963,410" stroke="#c09050" stroke-width="1.2" fill="none"/>
<!-- arms -->
<path fill="#e8c582" d="M916,476 C907,500 900,525 897,545 C893,565 891,585 889,600 C886,612 889,626 899,629 C910,631 916,621 915,606 C916,590 919,565 926,540 C932,515 937,495 937,482 Z"/>
<path fill="#e8c582" d="M1014,484 C1021,505 1027,525 1031,545 C1035,565 1040,585 1043,600 C1045,612 1050,618 1056,615 C1061,608 1059,590 1057,578 C1054,555 1050,530 1046,510 C1043,495 1041,485 1037,480 Z"/>
<!-- shirt -->
<path fill="#d8d8dc" d="M923,443 C935,438 950,437 962,438 L992,438 C1005,437 1018,439 1029,444 C1033,453 1036,466 1037,481 C1030,486 1020,489 1012,491 L1011,502 L940,502 L938,486 C930,485 922,482 914,476 C915,465 918,452 923,443 Z"/>
<!-- overalls -->
<path fill="url(#ovg)" d="M939,461 L1000,461 C1003,480 1008,500 1013,512 C1018,525 1025,535 1034,550 C1042,565 1046,580 1045,595 C1045,605 1044,612 1043,616 L976,616 L975,600 L974,616 L919,616 C915,608 914,598 915,585 C916,570 920,560 928,545 C935,530 940,515 941,500 Z"/>
<rect x="941" y="432" width="10" height="30" fill="#d2902e"/>
<rect x="991" y="432" width="11" height="30" fill="#d2902e"/>
<circle cx="945" cy="465" r="2.5" fill="#b8a060"/>
<circle cx="996" cy="465" r="2.5" fill="#b8a060"/>
<path d="M919,600 C940,596 960,590 976,587 C995,590 1020,596 1044,600" stroke="#c57e22" stroke-width="2" fill="none" opacity="0.6"/>
<!-- legs -->
<path fill="#e9c784" d="M918,616 C919,635 920,652 925,665 C932,680 945,688 958,690 C967,690 973,687 976,680 L975,616 Z"/>
<path fill="#e8c581" d="M975,616 L1041,616 C1042,640 1039,660 1034,690 C1028,720 1022,750 1020,778 L982,778 C980,750 977,720 976,690 C975,665 975,640 975,616 Z"/>
<path fill="#d18b2f" d="M967,690 L976,688 L976,700 L970,699 Z"/>
<path fill="#d48d30" d="M981,776 L1019,776 C1021,785 1020,796 1014,801 C1005,805 990,805 982,801 C976,796 976,785 981,776 Z"/>
</g>
</svg>

</div>
<div class="hdr" style="left:388px;top:901px;width:1181px;height:21px">Motions</div>
<div class="a" style="left:388px;top:922px;width:1181px;height:114px;background:#fff;border:1px solid #a8a8a8;border-bottom-color:#909090;border-top:0"></div>
<div class="a" style="left:488px;top:927px;width:33px;height:20px;background:#eeeeee"></div>
<div class="t" style="left:394px;top:930px">wait</div>
<div class="t" style="left:490px;top:930px">walk</div>
<div class="t" style="left:586px;top:930px">walk2</div>
<div class="t" style="left:682px;top:930px">run</div>
<div class="t" style="left:778px;top:930px">run2</div>
<div class="t" style="left:874px;top:930px">jumpup</div>
<div class="t" style="left:970px;top:930px">landing</div>
<div class="t" style="left:1066px;top:930px">jump</div>
<div class="t" style="left:1162px;top:930px">happy</div>
<div class="t" style="left:1258px;top:930px">disappointed</div>
<div class="t" style="left:1354px;top:930px">chair</div>
<div class="t" style="left:1450px;top:930px">bed</div>
<div class="t" style="left:394px;top:951px">sitdown</div>
<div class="t" style="left:490px;top:951px">float</div>
<div class="t" style="left:586px;top:951px">fly</div>
<div class="t" style="left:682px;top:951px">swim</div>
<div class="t" style="left:778px;top:951px">lying1</div>
<div class="t" style="left:874px;top:951px">lying2</div>
<div class="t" style="left:970px;top:951px">petrify</div>
<div class="t" style="left:1066px;top:951px">numb</div>
<div class="hdr" style="left:1573px;top:34px;width:341px;height:21px">Rendering Stamp Settings</div>
<div class="a" style="left:1573px;top:55px;width:341px;height:20px;background:#c38f00"></div>
<div class="t" style="left:1578px;top:58px;color:#fff3cc">Name</div>
<div class="a" style="left:1573px;top:75px;width:341px;height:21px;background:#f5efd5;border-bottom:1px solid #a8a8a0;border-left:1px solid #d0d0c0"></div>
<div class="t" style="left:1577px;top:80px">Terica</div>
<svg class="a" style="left:1898px;top:79px" width="14" height="14"><path d="M2,11 L3,7.5 L8.5,2 L12,5.5 L6.5,11 Z" fill="#9a9a9a"/><path d="M3.5,9 L4.8,10.3" stroke="#f5efd5" stroke-width="1.2"/></svg>
<div class="a" style="left:1573px;top:96px;width:1px;height:940px;background:#a8a8a8"></div>
<div class="a" style="left:1896px;top:96px;width:1px;height:940px;background:#a8a8a8"></div>
<div class="a" style="left:1906px;top:113px;width:2px;height:699px;background:#8a8a8a"></div>
<div class="acc" style="top:97px"><div class="g">Basic(Terica, , OFF, OFF, ON, OFF)</div><svg width="13" height="13"><circle cx="6.5" cy="6.5" r="6.3" fill="#fff8ea"/><path d="M5,3.5 L8,6.5 L5,9.5" fill="none" stroke="#c38f00" stroke-width="2.2"/></svg></div>
<div class="acc" style="top:131px"><div class="g">Simple Collision Settings(Capsule, Y, 0, 0.7,...</div><svg width="13" height="13"><circle cx="6.5" cy="6.5" r="6.3" fill="#fff8ea"/><path d="M5,3.5 L8,6.5 L5,9.5" fill="none" stroke="#c38f00" stroke-width="2.2"/></svg></div>
<div class="acc" style="top:165px"><div class="g">Motion Setting(Terica_mot, )</div><svg width="13" height="13"><circle cx="6.5" cy="6.5" r="6.3" fill="#fff8ea"/><path d="M5,3.5 L8,6.5 L5,9.5" fill="none" stroke="#c38f00" stroke-width="2.2"/></svg></div>
<div class="acc" style="top:199px"><div class="g">Materials Used</div><svg width="13" height="13"><circle cx="6.5" cy="6.5" r="6.3" fill="#fff8ea"/><path d="M3.5,5 L6.5,8 L9.5,5" fill="none" stroke="#c38f00" stroke-width="2.2"/></svg></div>
<div class="mh" style="top:232px"><span style="position:absolute;left:3px">Material Na...</span><span style="position:absolute;left:103px">Terica(mat_body)</span></div>
<div class="a" style="left:1673px;top:232px;width:1px;height:154px;background:#a8a8a8"></div>
<div class="mb" style="top:254px"><span class="t" style="left:3px;top:60px">Material 1</span></div>
<div class="a" style="left:1674px;top:256px;width:128px;height:128px;background:#4d4d4d"><svg width="128" height="128" style="position:absolute;left:0;top:0"><defs><radialGradient id="s0" cx="0.45" cy="0.45" r="0.6"><stop offset="0" stop-color="#fffde0"/><stop offset="0.7" stop-color="#faf2b0"/><stop offset="0.93" stop-color="#eedc80"/><stop offset="1" stop-color="#d8a840"/></radialGradient></defs>
<circle cx="64" cy="64" r="37" fill="url(#s0)"/>
<path d="M37.3,59.3 C45,56 55,61 64,61.6 C74,61 82,56 93.6,58 C88,66 78,71 64,70.5 C52,70 43,66 37.3,59.3 Z" fill="#1a1810"/>
<path d="M57,41.5 H72" stroke="#1a1810" stroke-width="2.2"/><path d="M93,44 L96,47 L95,52 L92,50 Z" fill="#1a1810"/></svg></div>
<div class="a" style="left:1868px;top:339px;width:28px;height:28px;background:#fff;border-radius:3px"><svg width="28" height="28" style="position:absolute;left:0;top:0"><defs><pattern id="mchk" width="2" height="2" patternUnits="userSpaceOnUse"><rect width="1" height="1" fill="#fff"/><rect x="1" y="1" width="1" height="1" fill="#fff"/></pattern></defs>
<circle cx="12.5" cy="11.6" r="10" fill="#5a5a5a"/><path d="M10,3.5 L18,11.5 L12,17.5 L4,9.5 Z" fill="url(#mchk)"/><path d="M8.5,6.5 L12,10 L9,13 L5.5,9.5 Z" fill="#fff"/>
<path d="M17,21 L24.5,21 L24.5,14" fill="none" stroke="#fff" stroke-width="4.5"/>
<path d="M18,22.5 L24.5,22.5 L24.5,15" fill="none" stroke="#5a5a5a" stroke-width="2.4"/><path d="M13.5,22.5 L18.5,19 L18.5,26 Z" fill="#5a5a5a"/></svg></div>
<svg class="a" style="left:1882px;top:371px" width="13" height="13"><path d="M1,6.5 H11 M6.5,2 L11,6.5 L6.5,11" fill="none" stroke="#9a9a9a" stroke-width="1.5"/></svg>
<div class="mh" style="top:386px"><span style="position:absolute;left:3px">Material Na...</span><span style="position:absolute;left:103px">Terica(mat_hair)</span></div>
<div class="a" style="left:1673px;top:386px;width:1px;height:154px;background:#a8a8a8"></div>
<div class="mb" style="top:408px"><span class="t" style="left:3px;top:60px">Material 2</span></div>
<div class="a" style="left:1674px;top:410px;width:128px;height:128px;background:#4d4d4d"><svg width="128" height="128" style="position:absolute;left:0;top:0"><defs><radialGradient id="s1" cx="0.52" cy="0.55" r="0.55"><stop offset="0" stop-color="#fff838"/><stop offset="0.6" stop-color="#ffe82c"/><stop offset="0.92" stop-color="#f8c020"/><stop offset="1" stop-color="#e8a010"/></radialGradient></defs>
<circle cx="64" cy="64" r="37" fill="url(#s1)"/></svg></div>
<div class="a" style="left:1868px;top:493px;width:28px;height:28px;background:#fff;border-radius:3px"><svg width="28" height="28" style="position:absolute;left:0;top:0"><defs><pattern id="mchk" width="2" height="2" patternUnits="userSpaceOnUse"><rect width="1" height="1" fill="#fff"/><rect x="1" y="1" width="1" height="1" fill="#fff"/></pattern></defs>
<circle cx="12.5" cy="11.6" r="10" fill="#5a5a5a"/><path d="M10,3.5 L18,11.5 L12,17.5 L4,9.5 Z" fill="url(#mchk)"/><path d="M8.5,6.5 L12,10 L9,13 L5.5,9.5 Z" fill="#fff"/>
<path d="M17,21 L24.5,21 L24.5,14" fill="none" stroke="#fff" stroke-width="4.5"/>
<path d="M18,22.5 L24.5,22.5 L24.5,15" fill="none" stroke="#5a5a5a" stroke-width="2.4"/><path d="M13.5,22.5 L18.5,19 L18.5,26 Z" fill="#5a5a5a"/></svg></div>
<svg class="a" style="left:1882px;top:525px" width="13" height="13"><path d="M1,6.5 H11 M6.5,2 L11,6.5 L6.5,11" fill="none" stroke="#9a9a9a" stroke-width="1.5"/></svg>
<div class="mh" style="top:540px"><span style="position:absolute;left:3px">Material Na...</span><span style="position:absolute;left:103px">Terica(mat_nose)</span></div>
<div class="a" style="left:1673px;top:540px;width:1px;height:154px;background:#a8a8a8"></div>
<div class="mb" style="top:562px"><span class="t" style="left:3px;top:60px">Material 3</span></div>
<div class="a" style="left:1674px;top:564px;width:128px;height:128px;background:#4d4d4d"><svg width="128" height="128" style="position:absolute;left:0;top:0"><defs><radialGradient id="s2" cx="0.52" cy="0.55" r="0.55"><stop offset="0" stop-color="#fff838"/><stop offset="0.6" stop-color="#ffe82c"/><stop offset="0.92" stop-color="#f8c020"/><stop offset="1" stop-color="#e8a010"/></radialGradient></defs>
<circle cx="64" cy="64" r="37" fill="url(#s2)"/></svg></div>
<div class="a" style="left:1868px;top:647px;width:28px;height:28px;background:#fff;border-radius:3px"><svg width="28" height="28" style="position:absolute;left:0;top:0"><defs><pattern id="mchk" width="2" height="2" patternUnits="userSpaceOnUse"><rect width="1" height="1" fill="#fff"/><rect x="1" y="1" width="1" height="1" fill="#fff"/></pattern></defs>
<circle cx="12.5" cy="11.6" r="10" fill="#5a5a5a"/><path d="M10,3.5 L18,11.5 L12,17.5 L4,9.5 Z" fill="url(#mchk)"/><path d="M8.5,6.5 L12,10 L9,13 L5.5,9.5 Z" fill="#fff"/>
<path d="M17,21 L24.5,21 L24.5,14" fill="none" stroke="#fff" stroke-width="4.5"/>
<path d="M18,22.5 L24.5,22.5 L24.5,15" fill="none" stroke="#5a5a5a" stroke-width="2.4"/><path d="M13.5,22.5 L18.5,19 L18.5,26 Z" fill="#5a5a5a"/></svg></div>
<svg class="a" style="left:1882px;top:679px" width="13" height="13"><path d="M1,6.5 H11 M6.5,2 L11,6.5 L6.5,11" fill="none" stroke="#9a9a9a" stroke-width="1.5"/></svg>
<div class="mh" style="top:694px"><span style="position:absolute;left:3px">Material Na...</span><span style="position:absolute;left:103px">Terica(mat_clothes)</span></div>
<div class="a" style="left:1673px;top:694px;width:1px;height:154px;background:#a8a8a8"></div>
<div class="mb" style="top:716px"><span class="t" style="left:3px;top:60px">Material 4</span></div>
<div class="a" style="left:1674px;top:718px;width:128px;height:128px;background:#4d4d4d"><svg width="128" height="128" style="position:absolute;left:0;top:0"><defs><radialGradient id="s3" cx="0.52" cy="0.55" r="0.55"><stop offset="0" stop-color="#fff838"/><stop offset="0.6" stop-color="#ffe82c"/><stop offset="0.92" stop-color="#f8c020"/><stop offset="1" stop-color="#e8a010"/></radialGradient></defs>
<circle cx="64" cy="64" r="37" fill="url(#s3)"/></svg></div>
<div class="a" style="left:1868px;top:801px;width:28px;height:28px;background:#fff;border-radius:3px"><svg width="28" height="28" style="position:absolute;left:0;top:0"><defs><pattern id="mchk" width="2" height="2" patternUnits="userSpaceOnUse"><rect width="1" height="1" fill="#fff"/><rect x="1" y="1" width="1" height="1" fill="#fff"/></pattern></defs>
<circle cx="12.5" cy="11.6" r="10" fill="#5a5a5a"/><path d="M10,3.5 L18,11.5 L12,17.5 L4,9.5 Z" fill="url(#mchk)"/><path d="M8.5,6.5 L12,10 L9,13 L5.5,9.5 Z" fill="#fff"/>
<path d="M17,21 L24.5,21 L24.5,14" fill="none" stroke="#fff" stroke-width="4.5"/>
<path d="M18,22.5 L24.5,22.5 L24.5,15" fill="none" stroke="#5a5a5a" stroke-width="2.4"/><path d="M13.5,22.5 L18.5,19 L18.5,26 Z" fill="#5a5a5a"/></svg></div>
<svg class="a" style="left:1882px;top:833px" width="13" height="13"><path d="M1,6.5 H11 M6.5,2 L11,6.5 L6.5,11" fill="none" stroke="#9a9a9a" stroke-width="1.5"/></svg>
<div class="mh" style="top:848px"><span style="position:absolute;left:3px">Material Na...</span><span style="position:absolute;left:103px">Terica(mat_button)</span></div>
<div class="a" style="left:1673px;top:848px;width:1px;height:154px;background:#a8a8a8"></div>
<div class="mb" style="top:870px"><span class="t" style="left:3px;top:60px">Material 5</span></div>
<div class="a" style="left:1674px;top:872px;width:128px;height:128px;background:#4d4d4d"><svg width="128" height="128" style="position:absolute;left:0;top:0"><defs><radialGradient id="s4" cx="0.45" cy="0.4" r="0.62"><stop offset="0" stop-color="#b89438"/><stop offset="0.5" stop-color="#937424"/><stop offset="0.85" stop-color="#6e5814"/><stop offset="1" stop-color="#524410"/></radialGradient>
<filter id="bl4" x="-50%" y="-50%" width="200%" height="200%"><feGaussianBlur stdDeviation="2.2"/></filter><clipPath id="cp4"><circle cx="64" cy="64" r="36.5"/></clipPath></defs>
<circle cx="64" cy="64" r="36.5" fill="url(#s4)"/>
<g clip-path="url(#cp4)" filter="url(#bl4)">
<path d="M40,48 C45,35 60,30 72,32 C85,34 93,45 92,58 C88,62 82,60 76,58 C70,62 66,70 60,72 C52,72 46,66 42,62 C38,58 38,52 40,48 Z" fill="#e8c868"/>
<ellipse cx="60" cy="36" rx="8" ry="3" fill="#8a7030"/>
<ellipse cx="76" cy="60" rx="8" ry="5" fill="#a89848"/>
<ellipse cx="57" cy="53" rx="9" ry="8" fill="#fff0a0"/>
<circle cx="57" cy="52" r="4" fill="#ffffff"/>
</g></svg></div>
<div class="a" style="left:1868px;top:955px;width:28px;height:28px;background:#fff;border-radius:3px"><svg width="28" height="28" style="position:absolute;left:0;top:0"><defs><pattern id="mchk" width="2" height="2" patternUnits="userSpaceOnUse"><rect width="1" height="1" fill="#fff"/><rect x="1" y="1" width="1" height="1" fill="#fff"/></pattern></defs>
<circle cx="12.5" cy="11.6" r="10" fill="#5a5a5a"/><path d="M10,3.5 L18,11.5 L12,17.5 L4,9.5 Z" fill="url(#mchk)"/><path d="M8.5,6.5 L12,10 L9,13 L5.5,9.5 Z" fill="#fff"/>
<path d="M17,21 L24.5,21 L24.5,14" fill="none" stroke="#fff" stroke-width="4.5"/>
<path d="M18,22.5 L24.5,22.5 L24.5,15" fill="none" stroke="#5a5a5a" stroke-width="2.4"/><path d="M13.5,22.5 L18.5,19 L18.5,26 Z" fill="#5a5a5a"/></svg></div>
<svg class="a" style="left:1882px;top:987px" width="13" height="13"><path d="M1,6.5 H11 M6.5,2 L11,6.5 L6.5,11" fill="none" stroke="#9a9a9a" stroke-width="1.5"/></svg>
<div class="mh" style="top:1002px"><span style="position:absolute;left:3px">Material Na...</span><span style="position:absolute;left:103px">Terica(mat_shoes)</span></div>
<div class="a" style="left:1673px;top:1002px;width:1px;height:33px;background:#a8a8a8"></div>
<div class="mb" style="top:1024px;height:10px"></div>
<div class="a" style="left:1674px;top:1026px;width:128px;height:10px;background:#4d4d4d"></div>
<div class="a" style="left:1896px;top:96px;width:1px;height:939px;background:#a8a8a8"></div>
<div class="a" style="left:1573px;top:96px;width:1px;height:939px;background:#a8a8a8"></div>
<div class="a" style="left:1573px;top:1035px;width:342px;height:4px;background:#f0f0f0"></div>
<div class="a" style="left:5px;top:1039px;width:1910px;height:36px;background:#6b6b6b"></div>
<div class="t" style="left:7px;top:1049px;font-size:13.6px;color:#f0f0f0;letter-spacing:0.46px">Manage all materials used in the game, including 3D models, textures, sprites, images, and sounds. 3D stamps and 2D stamps are also created here.</div>
<div class="a" style="left:1712px;top:1045px;width:92px;height:24px;background:#c4c4c4;border-radius:4px"></div>
<svg class="a" style="left:1717px;top:1048px" width="18" height="18"><rect width="18" height="18" rx="2" fill="#3a7ee0"/><path d="M3.5,9 L7.5,13 L14.5,5" fill="none" stroke="#fff" stroke-width="2.2"/></svg>
<div class="t" style="left:1742px;top:1050px;font-size:13px;letter-spacing:0">OK</div>
<div class="a" style="left:1808px;top:1045px;width:101px;height:24px;background:#c4c4c4;border-radius:4px"></div>
<svg class="a" style="left:1813px;top:1048px" width="18" height="18"><rect width="18" height="18" rx="2" fill="#e0508a"/><path d="M4.5,4.5 L13.5,13.5 M13.5,4.5 L4.5,13.5" stroke="#fff" stroke-width="2"/></svg>
<div class="t" style="left:1838px;top:1050px;font-size:13px;letter-spacing:0">Cancel</div>
</body></html>
